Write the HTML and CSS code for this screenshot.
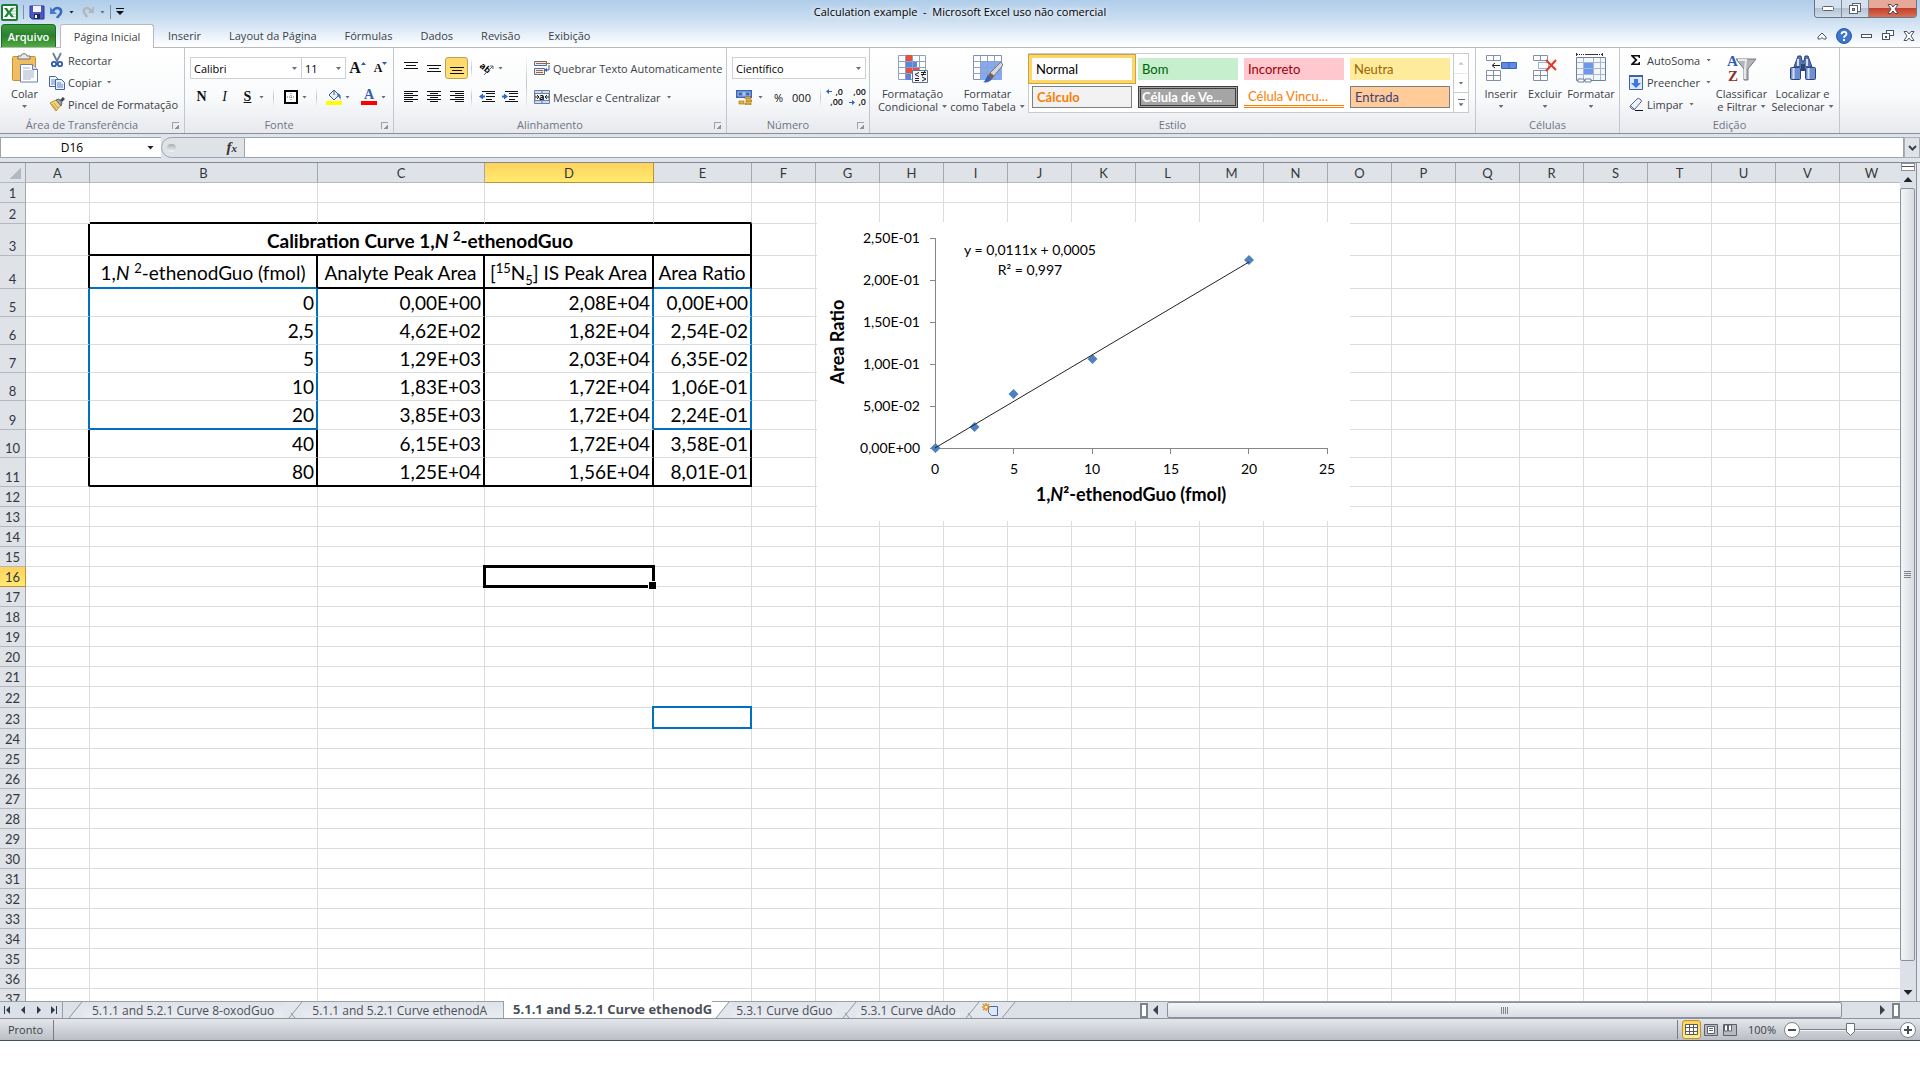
FILE: index.html
```
<!DOCTYPE html>
<html lang="pt-BR">
<head>
    <meta charset="UTF-8">
    <meta name="viewport" content="width=device-width, initial-scale=1.0">
    <title>Calculation example - Microsoft Excel uso não comercial</title>
    <link rel="stylesheet" href="styles.css">
</head>
<body>
<div class="app">
    <header class="top">
        <div class="titlebar">
            <div class="quick">
                <svg width="17" height="17" viewBox="0 0 17 17"><rect x="1" y="1" width="15" height="15" rx="1" fill="#fff" stroke="#1f7a34" stroke-width="2"/><path d="M10 4h5M10 7h5M10 10h5M10 13h5" stroke="#8fc79a"/><path d="M3 4h3l2 3 2-3h3l-3.500 4.500L13 13h-3L8 10l-2 3H3l3.300-4.500z" fill="#1c8a35"/></svg>
                <i class="qsep"></i>
                <button aria-label="Salvar"><svg width="16" height="16" viewBox="0 0 16 16"><path d="M1 2h14v13H3l-2-2z" fill="#4a58c2" stroke="#2c3592"/><path d="M4 2h8v6H4z" fill="#f2f5ff"/><path d="M5 10h6v5H5z" fill="#20255f"/><path d="M6 11h2v3H6z" fill="#fff"/></svg></button>
                <button aria-label="Desfazer"><svg width="14" height="14" viewBox="0 0 14 14"><path d="M3 6C6 1 12 3 11 7.500 10.500 10 8 11 7 13" fill="none" stroke="#3a68bd" stroke-width="2.500"/><path d="M0 2v7h7z" fill="#4a7bd0"/></svg></button>
                <i class="arr dark"></i>
                <button aria-label="Refazer" class="redo"><svg width="14" height="14" viewBox="0 0 14 14"><path d="M10 6C7 1 2 3 3 7c.5 2 2 3 3 5" fill="none" stroke="#b3b8bf" stroke-width="2.500"/><path d="M13 1v7H7z" fill="#b3b8bf"/></svg></button>
                <i class="arr"></i>
                <i class="qsep"></i>
                <button aria-label="Personalizar"><svg width="8" height="8" viewBox="0 0 8 8"><path d="M0 0h8v1H0zM0 3h8L4 7z" fill="#111"/></svg></button>
            </div>
            <h1>Calculation example &nbsp;- &nbsp;Microsoft Excel uso não comercial</h1>
            <div class="winbtns">
                <button aria-label="Minimizar"><svg width="12" height="6" viewBox="0 0 12 6"><rect x=".5" y=".5" width="11" height="4" rx="1" fill="#fff" stroke="#596273"/></svg></button>
                <button aria-label="Restaurar"><svg width="12" height="12" viewBox="0 0 12 12"><rect x="3.500" y=".5" width="8" height="8" fill="#fff" stroke="#596273"/><rect x=".5" y="2.500" width="8" height="8" fill="#fff" stroke="#596273"/><rect x="3.500" y="5.500" width="2" height="2" fill="#aab" stroke="#596273"/></svg></button>
                <button aria-label="Fechar" class="close"><svg width="12" height="10" viewBox="0 0 12 10"><path d="M1 .5h3L6 3l2-2.500h3L8 5l3 4.500H8L6 7 4 9.500H1L4 5z" fill="#fff" stroke="#5b4450"/></svg></button>
            </div>
        </div>
        <nav class="tabs">
            <button class="file">Arquivo</button>
            <button class="on">Página Inicial</button>
            <button>Inserir</button>
            <button>Layout da Página</button>
            <button>Fórmulas</button>
            <button>Dados</button>
            <button>Revisão</button>
            <button>Exibição</button>
            <div class="tools">
                <button aria-label="Minimizar Faixa"><svg width="10" height="8" viewBox="0 0 10 8"><path d="M1 5l4-4 4 4v2H6.500L5 5.500 3.500 7H1z" fill="#fff" stroke="#4d5461"/></svg></button>
                <button aria-label="Ajuda"><svg width="16" height="16" viewBox="0 0 16 16"><circle cx="8" cy="8" r="7.500" fill="#3f74cf" stroke="#2c58a8"/><path d="M5.500 6.200C5.500 3 10.500 3 10.500 6 10.500 7.800 8 7.800 8 9.700" fill="none" stroke="#fff" stroke-width="1.800"/><path d="M7 11h2v2H7z" fill="#fff"/></svg></button>
                <button aria-label="Minimizar Janela"><svg width="12" height="6" viewBox="0 0 12 6"><rect x=".5" y="1.500" width="10" height="3" fill="#fff" stroke="#4d5461"/></svg></button>
                <button aria-label="Restaurar Janela"><svg width="12" height="11" viewBox="0 0 12 11"><rect x="4.500" y=".5" width="7" height="5" fill="#fff" stroke="#4d5461"/><rect x=".5" y="3.500" width="7" height="6" fill="#fff" stroke="#4d5461"/><path d="M3 6h2v2H3z" fill="#4d5461"/></svg></button>
                <button aria-label="Fechar Janela"><svg width="12" height="10" viewBox="0 0 12 10"><path d="M1 .5h3L6 3l2-2.500h3L8 5l3 4.500H8L6 7 4 9.500H1L4 5z" fill="#fff" stroke="#4d5461"/></svg></button>
            </div>
        </nav>
    </header>

    <div class="ribbon">
        <section class="group clip">
            <div class="body">
                <button class="big">
                    <svg width="28" height="30" viewBox="0 0 28 30"><rect x="1.500" y="3.500" width="23" height="24" rx="1" fill="#f0bd60" stroke="#c9902f"/><path d="M7 6V3h3c0-3 6-3 6 0h3v3z" fill="#e8e8ea" stroke="#70737a"/><path d="M9.500 11.500h12l5 5V29h-17z" fill="#fff" stroke="#6d7fa6"/><path d="M21.500 11.500v5h5" fill="#d7e0f1" stroke="#6d7fa6"/><path d="M12 15h7M12 18h11M12 20h11M12 22h11M12 24h11M12 26h8" stroke="#a3b1cb"/></svg>
                    <span>Colar</span><i class="arr"></i>
                </button>
                <div class="list">
                    <button><svg width="16" height="16" viewBox="0 0 16 16"><path d="M4 1l4.500 9M12 1L7.500 10" stroke="#6c7d9c" stroke-width="1.800"/><circle cx="5" cy="12" r="2.200" fill="#fff" stroke="#2d5bb0" stroke-width="1.800"/><circle cx="11" cy="12" r="2.200" fill="#fff" stroke="#2d5bb0" stroke-width="1.800"/></svg>Recortar</button>
                    <button><svg width="16" height="16" viewBox="0 0 16 16"><path d="M.5 2.500h6l3 3v7h-9z" fill="#fff" stroke="#3f65ad"/><path d="M2 6h4M2 8h5M2 10h5" stroke="#5c83cc"/><path d="M6.500 5.500h6l3 3v7h-9z" fill="#e9f0fc" stroke="#3f65ad"/><path d="M8 9h4M8 11h6M8 13h6" stroke="#5c83cc"/></svg>Copiar<i class="arr"></i></button>
                    <button><svg width="16" height="16" viewBox="0 0 16 16"><path d="M1 7l6-3 5 5-5 6z" fill="#f5d577" stroke="#b88b2b"/><path d="M3 8l4 5M5 7l4 5" stroke="#c99f3e"/><path d="M7 4l3-1 3 4-1 3z" fill="#9fa4ac" stroke="#60656e"/><path d="M11 4l3-3 2 2-3 3z" fill="#3c4452"/></svg>Pincel de Formatação</button>
                </div>
            </div>
            <h2>Área de Transferência<i class="launch"></i></h2>
        </section>

        <section class="group font">
            <div class="body rows">
                <div class="row">
                    <select class="fname" aria-label="Fonte"><option>Calibri</option></select><select class="fsize" aria-label="Tamanho"><option>11</option></select>
                    <button class="ic serif a1">A<sup><svg width="5" height="3" viewBox="0 0 5 3"><path d="M0 3h5L2.500 0z" fill="#3358a8"/></svg></sup></button>
                    <button class="ic serif a2">A<sup><svg width="5" height="3" viewBox="0 0 5 3"><path d="M0 0h5L2.500 3z" fill="#3358a8"/></svg></sup></button>
                </div>
                <div class="row">
                    <button class="ic serif"><b>N</b></button>
                    <button class="ic serif"><em>I</em></button>
                    <button class="ic serif"><u>S</u></button><i class="arr"></i>
                    <i class="sep"></i>
                    <button class="ic" aria-label="Bordas"><svg width="14" height="14" viewBox="0 0 14 14"><rect x="1" y="1" width="12" height="12" fill="#fff" stroke="#000" stroke-width="2"/><path d="M7 3v8M3 7h8" stroke="#666" stroke-dasharray="1 1"/></svg></button><i class="arr"></i>
                    <i class="sep"></i>
                    <button class="ic" aria-label="Cor de Preenchimento"><svg width="16" height="16" viewBox="0 0 16 16"><path d="M0 12h16v4H0z" fill="#ff0"/><path d="M3 6l5-5 5 5-5 5z" fill="#e8edf6" stroke="#42597f"/><path d="M8 6V1" stroke="#42597f"/><path d="M11 4c4 1 4 3 3.500 7-1-2-1-3-3-4z" fill="#3b6fc4"/></svg></button><i class="arr"></i>
                    <button class="ic serif fcolor">A</button><i class="arr"></i>
                </div>
            </div>
            <h2>Fonte<i class="launch"></i></h2>
        </section>

        <section class="group align">
            <div class="body">
                <div class="rows">
                    <div class="row">
                        <button class="ic" aria-label="Alinhar em Cima"><svg width="14" height="14" viewBox="0 0 14 14"><path d="M0 1.500h14M2 4.500h10M0 7.500h14" stroke="#111"/></svg></button>
                        <button class="ic" aria-label="Alinhar no Meio"><svg width="14" height="14" viewBox="0 0 14 14"><path d="M0 4.500h14M2 7.500h10M0 10.500h14" stroke="#111"/></svg></button>
                        <button class="ic on" aria-label="Alinhar em Baixo"><svg width="14" height="14" viewBox="0 0 14 14"><path d="M0 6.500h14M2 9.500h10M0 12.500h14" stroke="#111"/></svg></button>
                        <i class="sep"></i>
                        <button class="ic" aria-label="Orientação"><svg width="16" height="16" viewBox="0 0 16 16"><text x="1" y="10" font-size="9" font-weight="700" transform="rotate(40 5 7)">ab</text><path d="M5 15L14 6M14 6h-3M14 6v3" stroke="#666" fill="none"/></svg></button><i class="arr"></i>
                    </div>
                    <div class="row">
                        <button class="ic" aria-label="Esquerda"><svg width="14" height="12" viewBox="0 0 14 12"><path d="M0 .5h14M0 2.500h9M0 4.500h14M0 6.500h9M0 8.500h14M0 10.500h9" stroke="#111"/></svg></button>
                        <button class="ic" aria-label="Centralizar"><svg width="14" height="12" viewBox="0 0 14 12"><path d="M0 .5h14M3 2.500h8M0 4.500h14M3 6.500h8M0 8.500h14M3 10.500h8" stroke="#111"/></svg></button>
                        <button class="ic" aria-label="Direita"><svg width="14" height="12" viewBox="0 0 14 12"><path d="M0 .5h14M5 2.500h9M0 4.500h14M5 6.500h9M0 8.500h14M5 10.500h9" stroke="#111"/></svg></button>
                        <i class="sep"></i>
                        <button class="ic" aria-label="Diminuir Recuo"><svg width="16" height="14" viewBox="0 0 16 14"><path d="M3 1.500h13M7 3.500h9M7 6.500h9M7 9.500h6M3 11.500h13" stroke="#111"/><path d="M0 6.500l4-3v2h2v2H4v2z" fill="#3167c4"/></svg></button>
                        <button class="ic" aria-label="Aumentar Recuo"><svg width="16" height="14" viewBox="0 0 16 14"><path d="M3 1.500h13M7 3.500h9M7 6.500h9M7 9.500h6M3 11.500h13" stroke="#111"/><path d="M6 6.500l-4-3v2H0v2h2v2z" fill="#3167c4"/></svg></button>
                    </div>
                </div>
                <i class="sep tall"></i>
                <div class="rows texts">
                    <button><svg width="16" height="16" viewBox="0 0 16 16"><path d="M.5 1.500h12v4H.5zM.5 8.500h10v6H.5z" fill="#e7edf7" stroke="#5b6c8f"/><path d="M2 3.500h14M2 10.500h7M2 12.500h7" stroke="#b3622a"/><path d="M15 5v5h-3" stroke="#2f5fb5" fill="none"/><path d="M10 10l3-2v4z" fill="#2f5fb5"/></svg>Quebrar Texto Automaticamente</button>
                    <button><svg width="16" height="16" viewBox="0 0 16 16"><path d="M.5 1.500h15v13H.5z" fill="#cfdcf0" stroke="#6b7fa6"/><path d="M8 1v3M8 12v3" stroke="#6b7fa6"/><path d="M1 4.500h14v7H1z" fill="#fff" stroke="#6b7fa6"/><path d="M1 8h4M11 8h4M3 6l2 2-2 2M13 6l-2 2 2 2" stroke="#222" fill="none"/><text x="5" y="11" font-size="9" font-weight="700">a</text></svg>Mesclar e Centralizar<i class="arr"></i></button>
                </div>
            </div>
            <h2>Alinhamento<i class="launch"></i></h2>
        </section>

        <section class="group number">
            <div class="body rows">
                <select class="nfmt" aria-label="Formato de Número"><option>Científico</option></select>
                <div class="row">
                    <button class="ic" aria-label="Moeda"><svg width="16" height="16" viewBox="0 0 16 16"><path d="M0 1h16v8H0z" fill="#3d66b8"/><path d="M2 3h12v4H2z" fill="none" stroke="#a9c2ee"/><circle cx="8" cy="5" r="2" fill="#a9c2ee"/><path d="M9 8h6v2H9zM10 11h6v2h-6zM9 14h6v2H9zM3 12h5v3H3z" fill="#e9b33a" stroke="#9a6b12" stroke-width=".6"/></svg></button><i class="arr"></i>
                    <button class="ic pct">%</button>
                    <button class="ic pct">000</button>
                    <i class="sep"></i>
                    <button class="ic dec">,0<br>,00<svg width="6" height="5" viewBox="0 0 6 5"><path d="M0 2.500L3 0v2h3v1H3v2z" fill="#2c62c4"/></svg></button>
                    <button class="ic dec">,00<br>,0<svg class="low" width="6" height="5" viewBox="0 0 6 5"><path d="M6 2.500L3 0v2H0v1h3v2z" fill="#2c62c4"/></svg></button>
                </div>
            </div>
            <h2>Número<i class="launch"></i></h2>
        </section>

        <section class="group style">
            <div class="body">
                <button class="big">
                    <svg width="30" height="30" viewBox="0 0 30 30"><path d="M.5 2.500h27v24H.5z" fill="#fff" stroke="#8ea0c4"/><path d="M7 2h7v6H7zM7 14h14v6H7z" fill="#e8503a"/><path d="M7 8h12v6H7zM7 20h6v7H7z" fill="#5b86e0"/><path d="M7.500 2v25M14.500 2v25M21.500 2v25M0 8.500h28M0 14.500h28M0 20.500h28" stroke="#8ea0c4"/><path d="M14.500 17.500h15v12h-15z" fill="#f4f6fa" stroke="#68738a"/><path d="M21 19.500l-4 2 4 2M17 25.500h4M17 27.500h4M23 21.500h5M23 19.500h5M27 18l-3 5M24 24l4 2-4 2" stroke="#222" fill="none"/></svg>
                    <span>Formatação<br>Condicional<i class="arr"></i></span>
                </button>
                <button class="big">
                    <svg width="30" height="30" viewBox="0 0 30 30"><path d="M.5 2.500h28v24H.5z" fill="#fff" stroke="#7f90b3"/><path d="M7 9h22v18H7z" fill="#86aaf0"/><path d="M7.500 2v25M14.500 2v25M21.500 2v25M0 8.500h29M0 14.500h29M0 20.500h29" stroke="#8ea0c4"/><path d="M28 9l2 3-9 11-4-3z" fill="#d5d8dd" stroke="#70757e"/><path d="M17 20l4 3-2 3-4-3z" fill="#8a5a34"/><path d="M15 22l4 4c-2 3-6 4-9 3 3-1 3-5 5-7z" fill="#3566b8"/></svg>
                    <span>Formatar<br>como Tabela<i class="arr"></i></span>
                </button>
                <div class="gallery">
                    <div class="swatches">
                        <button class="s-normal">Normal</button>
                        <button class="s-good">Bom</button>
                        <button class="s-bad">Incorreto</button>
                        <button class="s-neutral">Neutra</button>
                        <button class="s-calc">Cálculo</button>
                        <button class="s-check">Célula de Ve...</button>
                        <button class="s-link">Célula Vincu...</button>
                        <button class="s-input">Entrada</button>
                    </div>
                    <div class="gscroll">
                        <button aria-label="Acima" class="off"><i class="arr up"></i></button>
                        <button aria-label="Abaixo"><i class="arr"></i></button>
                        <button aria-label="Mais" class="more"><i class="arr"></i></button>
                    </div>
                </div>
            </div>
            <h2>Estilo</h2>
        </section>

        <section class="group cells">
            <div class="body">
                <button class="big">
                    <svg width="32" height="30" viewBox="0 0 32 30"><path d="M1.500 2.500h14v5h-14zM1.500 17.500h14v10h-14zM8.500 2.500v5M8.500 17.500v10M1.500 22.500h14" fill="#fff" stroke="#8390ad"/><path d="M16.500 9.500h15v6h-15z" fill="#5e8be6" stroke="#3e64b0"/><path d="M24 9.500v6" stroke="#3e64b0"/><path d="M8 12.500h7M10 10l-3 2.500 3 2.500" stroke="#222" fill="none"/></svg>
                    <span>Inserir</span><i class="arr"></i>
                </button>
                <button class="big">
                    <svg width="26" height="30" viewBox="0 0 26 30"><path d="M1.500 2.500h14v5h-14zM1.500 17.500h14v10h-14zM8.500 2.500v5M8.500 17.500v10M1.500 22.500h14" fill="#fff" stroke="#8390ad"/><path d="M6.500 9.500h10v6h-10z" fill="none" stroke="#3e64b0" stroke-dasharray="1 1"/><path d="M14 7l10 10M24 7L14 18" stroke="#e5391f" stroke-width="2"/></svg>
                    <span>Excluir</span><i class="arr"></i>
                </button>
                <button class="big">
                    <svg width="32" height="30" viewBox="0 0 32 30"><path d="M2 1.500h26" stroke="#222" stroke-dasharray="1 1"/><path d="M10 1.500h12M1.500 0v3M27.500 0v3" stroke="#334"/><path d="M1.500 4.500h29v23h-29z" fill="#f3f6fb" stroke="#6f7f9f"/><path d="M9 10h9v12H9z" fill="#6c97ee"/><path d="M8.500 5v22M18.500 5v22M25.500 5v22M2 9.500h28M2 15.500h28M2 21.500h28" stroke="#aab6cc"/><path d="M3 26h6v3H3zM10 26h6v3h-6z" fill="#fff" stroke="#6f7f9f"/></svg>
                    <span>Formatar</span><i class="arr"></i>
                </button>
            </div>
            <h2>Células</h2>
        </section>

        <section class="group edit">
            <div class="body">
                <div class="list">
                    <button><svg width="14" height="16" viewBox="0 0 14 16"><path d="M2 3h9v3h-1L9 4.500H5L8.500 8 5 11.500h4L10 10h1v3H2v-1l4-4-4-4z" fill="#111"/></svg>AutoSoma<i class="arr"></i></button>
                    <button><svg width="14" height="16" viewBox="0 0 14 16"><path d="M.5 1.500h13v14H.5z" fill="#dfe9fb" stroke="#3a62b0"/><path d="M0 1h14v2H0z" fill="#3a62b0"/><path d="M5 5h4v4h3l-5 5-5-5h3z" fill="#3f78dd"/></svg>Preencher<i class="arr"></i></button>
                    <button><svg width="14" height="16" viewBox="0 0 14 16"><path d="M1 10l7-7q1-1 3 0l1 1q1 1 0 2l-6 7q-1 1-3 0l-1-1q-1-1-1-2z" fill="#eef2fa" stroke="#56658a"/><path d="M2 10l4 4" stroke="#56658a"/><path d="M6 14.500h8" stroke="#111"/></svg>Limpar<i class="arr"></i></button>
                </div>
                <button class="big">
                    <svg width="30" height="30" viewBox="0 0 30 30"><path d="M9 6h20l-8 10v11h-4V16z" fill="#b2b4b8" stroke="#75787e"/><path d="M11 7h8l-1 9v10" fill="none" stroke="#e9eaec" stroke-width="2"/><text x="0" y="13" class="az" fill="#2e5db8">A</text><text x="1" y="28" class="az" fill="#8c2f2c">Z</text></svg>
                    <span>Classificar<br>e Filtrar<i class="arr"></i></span>
                </button>
                <button class="big">
                    <svg width="28" height="28" viewBox="0 0 28 28"><path d="M9 2h3l1 5h2l1-5h3l4 11H5z" fill="#5775b3" stroke="#2c4478"/><rect x="1.500" y="13.500" width="10" height="12" rx="1" fill="#6f8fce" stroke="#2c4478"/><rect x="16.500" y="13.500" width="10" height="12" rx="1" fill="#6f8fce" stroke="#2c4478"/><path d="M4.500 14v11M19.500 14v11M9 5v7M18 5v7" stroke="#d5e1f7" stroke-width="2"/><path d="M12 10h4v7h-4z" fill="#2c4478"/></svg>
                    <span>Localizar e<br>Selecionar<i class="arr"></i></span>
                </button>
            </div>
            <h2>Edição</h2>
        </section>
    </div>

    <div class="formula">
        <div class="namebox"><input type="text" value="D16" aria-label="Caixa de nome"><i class="arr dark"></i></div>
        <div class="fx"><i class="knob"></i><button aria-label="Inserir função">f<small>x</small></button></div>
        <input type="text" class="fbar" aria-label="Barra de fórmulas">
        <button class="expand" aria-label="Expandir"><svg width="9" height="6" viewBox="0 0 9 6"><path d="M1 1l3.500 3.500L8 1" fill="none" stroke="#3c424c" stroke-width="2"/></svg></button>
    </div>

    <main class="book">
        <div class="sheet">
            <table class="grid" id="grid">
                <colgroup>
                    <col class="c-head"><col class="c-a"><col class="c-b"><col class="c-c"><col class="c-d"><col class="c-e"><col span="18" class="c-a">
                </colgroup>
                <thead>
                    <tr><th class="corner"></th><th>A</th><th>B</th><th>C</th><th class="sel">D</th><th>E</th><th>F</th><th>G</th><th>H</th><th>I</th><th>J</th><th>K</th><th>L</th><th>M</th><th>N</th><th>O</th><th>P</th><th>Q</th><th>R</th><th>S</th><th>T</th><th>U</th><th>V</th><th>W</th></tr>
                </thead>
                <tbody>
                    <tr><th>1</th></tr>
                    <tr class="h21"><th>2</th><td></td><td class="bb"></td><td class="bb"></td><td class="bb"></td><td class="bb"></td></tr>
                    <tr class="h32"><th>3</th><td class="br"></td><td colspan="4" class="br bb name">Calibration Curve 1,<em>N</em> <sup>2</sup>-ethenodGuo</td></tr>
                    <tr class="h33"><th>4</th><td class="br"></td><td class="br bb blueb mid">1,<em>N</em> <sup>2</sup>-ethenodGuo (fmol)</td><td class="br bb mid">Analyte Peak Area</td><td class="br bb mid">[<sup>15</sup>N<sub>5</sub>] IS Peak Area</td><td class="br bb blueb mid">Area Ratio</td></tr>
                    <tr class="h28"><th>5</th><td class="br bluer"></td><td class="br bluer">0</td><td class="br">0,00E+00</td><td class="br bluer">2,08E+04</td><td class="br bluer">0,00E+00</td></tr>
                    <tr class="h28"><th>6</th><td class="br bluer"></td><td class="br bluer">2,5</td><td class="br">4,62E+02</td><td class="br bluer">1,82E+04</td><td class="br bluer">2,54E-02</td></tr>
                    <tr class="h28"><th>7</th><td class="br bluer"></td><td class="br bluer">5</td><td class="br">1,29E+03</td><td class="br bluer">2,03E+04</td><td class="br bluer">6,35E-02</td></tr>
                    <tr class="h28"><th>8</th><td class="br bluer"></td><td class="br bluer">10</td><td class="br">1,83E+03</td><td class="br bluer">1,72E+04</td><td class="br bluer">1,06E-01</td></tr>
                    <tr class="h29"><th>9</th><td class="br bluer"></td><td class="br bluer bb blueb">20</td><td class="br">3,85E+03</td><td class="br bluer">1,72E+04</td><td class="br bluer bb blueb">2,24E-01</td></tr>
                    <tr class="h28"><th>10</th><td class="br"></td><td class="br">40</td><td class="br">6,15E+03</td><td class="br">1,72E+04</td><td class="br">3,58E-01</td></tr>
                    <tr class="h29"><th>11</th><td class="br"></td><td class="br bb">80</td><td class="br bb">1,25E+04</td><td class="br bb">1,56E+04</td><td class="br bb">8,01E-01</td></tr>
                </tbody>
            </table>
            <svg class="chart" width="533" height="299" viewBox="0 0 533 299">
                <path class="axis" d="M118.500 16v215M113 226.500h398M113 16.500h5M113 58.500h5M113 100.500h5M113 142.500h5M113 184.500h5M196.500 226v6M275.500 226v6M353.500 226v6M431.500 226v6M510.500 226v6"/>
                <g class="mark"><path d="M118.500 221l5 5-5 5-5-5z"/><path d="M157.500 200l5 5-5 5-5-5z"/><path d="M196.500 167l5 5-5 5-5-5z"/><path d="M275.500 132l5 5-5 5-5-5z"/><path d="M432 33l5 5-5 5-5-5z"/></g>
                <path d="M118 226L432 40" stroke="#222" fill="none"/>
                <g text-anchor="end"><text x="103" y="21">2,50E-01</text><text x="103" y="63">2,00E-01</text><text x="103" y="105">1,50E-01</text><text x="103" y="147">1,00E-01</text><text x="103" y="189">5,00E-02</text><text x="103" y="231">0,00E+00</text></g>
                <g text-anchor="middle"><text x="118" y="252">0</text><text x="197" y="252">5</text><text x="275" y="252">10</text><text x="354" y="252">15</text><text x="432" y="252">20</text><text x="510" y="252">25</text>
                <text x="213" y="33">y = 0,0111x + 0,0005</text><text x="213" y="53">R² = 0,997</text>
                <text x="314" y="279" class="ttl">1,<tspan font-style="italic">N</tspan>²-ethenodGuo (fmol)</text>
                <text x="27" y="120" class="ttl" transform="rotate(-90 27 120)">Area Ratio</text></g>
            </svg>
        </div>
        <div class="vscroll">
            <i class="split"></i>
            <button aria-label="Subir"><i class="arr up dark"></i></button>
            <div class="vthumb"><i></i></div>
            <button aria-label="Descer" class="down"><i class="arr dark"></i></button>
        </div>
    </main>

    <div class="bottom">
        <div class="navs">
            <button aria-label="Primeira"><svg width="8" height="8" viewBox="0 0 8 8"><path d="M0 0h1v8H0zM6 0v8L2 4z" fill="#333a47"/></svg></button>
            <button aria-label="Anterior"><svg width="8" height="8" viewBox="0 0 8 8"><path d="M6 0v8L2 4z" fill="#333a47"/></svg></button>
            <button aria-label="Próxima"><svg width="8" height="8" viewBox="0 0 8 8"><path d="M2 0v8l4-4z" fill="#333a47"/></svg></button>
            <button aria-label="Última"><svg width="8" height="8" viewBox="0 0 8 8"><path d="M6 0h1v8H6zM1 0v8l4-4z" fill="#333a47"/></svg></button>
        </div>
        <svg class="slant" width="20" height="16" viewBox="0 0 20 16"><path d="M20 0h-1L6 16h14z" fill="#e3e6ec"/><path d="M19 0L6 16" stroke="#8f97a3"/></svg>
        <button class="st wide">5.1.1 and 5.2.1 Curve 8-oxodGuo</button>
        <svg class="slant" width="20" height="16" viewBox="0 0 20 16"><path d="M0 0h20v16H0z" fill="#e3e6ec"/><path d="M19 0L6 16M8 11l4 5" stroke="#8f97a3"/></svg>
        <button class="st wide">5.1.1 and 5.2.1 Curve ethenodA</button>
        <button class="st on">5.1.1 and 5.2.1 Curve ethenodG</button>
        <svg class="slant" width="20" height="16" viewBox="0 0 20 16"><path d="M0 0h17L4 16H0z" fill="#fff"/><path d="M17 0h3v16H4z" fill="#e3e6ec"/><path d="M17 0L4 16" stroke="#8f97a3"/></svg>
        <button class="st">5.3.1 Curve dGuo</button>
        <svg class="slant" width="20" height="16" viewBox="0 0 20 16"><path d="M0 0h20v16H0z" fill="#e3e6ec"/><path d="M19 0L6 16M8 11l4 5" stroke="#8f97a3"/></svg>
        <button class="st">5.3.1 Curve dAdo</button>
        <svg class="slant" width="20" height="16" viewBox="0 0 20 16"><path d="M0 0h20v16H0z" fill="#e3e6ec"/><path d="M19 0L6 16M8 11l4 5" stroke="#8f97a3"/></svg>
        <button class="st new" aria-label="Inserir Planilha"><svg width="36" height="16" viewBox="0 0 36 16"><path d="M0 0h35L22 16H0z" fill="#e3e6ec"/><path d="M35 0L22 16" stroke="#8f97a3"/><path d="M8.500 4.500h9v9h-6l-3-3z" fill="#dbe7fb" stroke="#52699c"/><path d="M6 1v8M2 5h8M3 2l6 6M9 2L3 8" stroke="#df8a1c" stroke-width="1.400"/><circle cx="6" cy="5" r="1.500" fill="#fff2c4"/></svg></button>
        <div class="hscroll">
            <i class="hsplit"></i>
            <button aria-label="Esquerda"><svg width="6" height="10" viewBox="0 0 6 10"><path d="M5 0v10L0 5z" fill="#3a3f48"/></svg></button>
            <div class="hthumb"><i></i></div>
            <button aria-label="Direita" class="right"><svg width="6" height="10" viewBox="0 0 6 10"><path d="M0 0v10l5-5z" fill="#3a3f48"/></svg></button>
            <i class="hsplit"></i>
        </div>
    </div>

    <footer class="status">
        <span class="ready">Pronto</span>
        <div class="view">
            <button class="on" aria-label="Normal"><svg width="13" height="11" viewBox="0 0 13 11"><path d="M.5.500h12v10H.5zM4.500 0v11M8.500 0v11M0 3.500h13M0 7.500h13" fill="#fff" stroke="#5a5a5a"/></svg></button>
            <button aria-label="Layout da Página"><svg width="14" height="12" viewBox="0 0 14 12"><path d="M.5.500h13v11H.5z" fill="#b7bbc0" stroke="#5d6268"/><path d="M3.500 2.500h7v7h-7z" fill="#fff" stroke="#5d6268"/><path d="M5 4.500h4M5 6.500h4" stroke="#5d6268"/></svg></button>
            <button aria-label="Quebra de Página"><svg width="14" height="12" viewBox="0 0 14 12"><path d="M.5.500h13v11H.5z" fill="#b7bbc0" stroke="#5d6268"/><path d="M1.500 1h3v6h-3zM5.500 1h3v6h-3z" fill="#fff" stroke="#5d6268"/></svg></button>
            <span class="pc">100%</span>
            <button class="z" aria-label="Reduzir"><svg width="16" height="16" viewBox="0 0 16 16"><circle cx="8" cy="8" r="7.500" fill="#fff" stroke="#7d838c"/><path d="M4 7h8v2H4z" fill="#4a4e55"/></svg></button>
            <input type="range" min="0" max="100" value="50" aria-label="Zoom">
            <button class="z" aria-label="Ampliar"><svg width="16" height="16" viewBox="0 0 16 16"><circle cx="8" cy="8" r="7.500" fill="#fff" stroke="#7d838c"/><path d="M4 7h8v2H4zM7 4h2v8H7z" fill="#4a4e55"/></svg></button>
        </div>
    </footer>
</div>
<script src="grid.js"></script>
</body>
</html>
```
FILE: styles.css
```
*{
    box-sizing: border-box;
}
body{
    margin: 0;
    background: #fff;
    font-family: "Open Sans", "Noto Sans", sans-serif;
    font-size: 11px;
    color: #3b3f46;
    overflow: hidden;
}
button{
    border: 0;
    padding: 0;
    background: none;
    font: inherit;
    color: inherit;
    white-space: nowrap;
}
svg{
    display: block;
    flex: none;
}
.app{
    height: calc(100vh - 39px);
    display: flex;
    flex-direction: column;
}

/* small drop-down arrow */
.arr{
    display: inline-block;
    flex: none;
    width: 5px;
    height: 3px;
    background: #6a6d73;
    clip-path: polygon(0 0, 100% 0, 50% 100%);
}
.arr.dark{
    width: 7px;
    height: 4px;
    background: #222;
}
.arr.up{
    clip-path: polygon(0 100%, 100% 100%, 50% 0);
}

/* title bar and tabs */
.top{
    background: linear-gradient(#afcdea, #c9ddf1 40%, #fbfdff 95%);
    border-bottom: 1px solid #b6babf;
}
.titlebar{
    height: 24px;
    display: grid;
    grid-template-columns: 1fr auto 1fr;
}
.titlebar h1{
    margin: 0;
    font-size: 11px;
    font-weight: 400;
    line-height: 24px;
    color: #000;
    text-shadow: 0 0 6px #fff, 0 0 6px #fff;
}
.quick{
    display: flex;
    align-items: center;
    gap: 5px;
    padding-left: 1px;
}
.quick .redo{
    margin-left: 2px;
}
.quick .dark{
    width: 5px;
    height: 3px;
}
.qsep{
    width: 1px;
    height: 14px;
    background: #7d8ea3;
}
.winbtns{
    justify-self: end;
    display: flex;
    height: 18px;
    margin-right: 3px;
    border: 1px solid #6c7685;
    border-top: 0;
    border-radius: 0 0 4px 4px;
    overflow: hidden;
}
.winbtns button{
    width: 27px;
    display: flex;
    align-items: center;
    justify-content: center;
    background: linear-gradient(#d5e1ee 45%, #b3c3d4 50%, #cfdce9);
    border-right: 1px solid #7f8a99;
}
.winbtns .close{
    width: 47px;
    border: 0;
    background: linear-gradient(#e6a898 45%, #c3402a 50%, #d9705a);
}
.tabs{
    display: flex;
    height: 23px;
    padding-left: 1px;
}
.tabs > button{
    padding: 0 14px;
}
.tabs .file{
    width: 55px;
    margin-right: 4px;
    padding: 0;
    color: #fff;
    font-weight: 600;
    background: linear-gradient(#3f9a3c, #2b7f2e 50%, #4fae3d);
    border: 1px solid #1c6a27;
    border-bottom: 0;
    border-radius: 4px 4px 0 0;
}
.tabs .on{
    width: 94px;
    padding: 0;
    background: #fff;
    border: 1px solid #b6babf;
    border-bottom: 0;
    border-radius: 3px 3px 0 0;
    margin-bottom: -1px;
}
.tools{
    display: flex;
    align-items: center;
    gap: 9px;
    margin-left: auto;
    padding-right: 5px;
}

/* ribbon */
.ribbon{
    display: flex;
    flex: none;
    height: 86px;
    background: linear-gradient(#fff, #fafbfc 55%, #e7e9ee);
    border-bottom: 1px solid #8b9097;
}
.group{
    flex: none;
    display: flex;
    flex-direction: column;
    border-right: 1px solid #c3c7cd;
}
.group h2{
    position: relative;
    margin: 0;
    font-size: 11px;
    font-weight: 400;
    line-height: 15px;
    text-align: center;
    color: #6e7683;
    padding-right: 20px;
}
.launch{
    position: absolute;
    right: 5px;
    top: 5px;
    width: 7px;
    height: 7px;
    border: 1px solid #9da2a9;
    border-right: 0;
    border-bottom: 0;
    background: linear-gradient(135deg, transparent 60%, #8d929a 60%);
}
.body{
    display: flex;
    height: 69px;
}
.clip{ width: 185px; }
.font{ width: 209px; }
.align{ width: 333px; }
.number{ width: 143px; }
.style{ width: 606px; }
.cells{ width: 144px; }
.edit{ width: 220px; }
.style h2, .cells h2, .edit h2{
    padding: 0;
}
.big{
    display: flex;
    flex-direction: column;
    align-items: center;
    padding-top: 5px;
    line-height: 13px;
}
.big svg{
    height: 30px;
    margin-bottom: 4px;
}
.big .arr{
    margin-top: 5px;
}
.big span .arr{
    margin: 0 0 3px 4px;
}
.clip .big{
    width: 49px;
}
.list{
    display: flex;
    flex-direction: column;
    padding-top: 1px;
}
.list button{
    display: flex;
    align-items: center;
    height: 22px;
    gap: 3px;
}
.list .arr{
    margin-left: 2px;
}
.rows{
    display: flex;
    flex-direction: column;
    gap: 7px;
    padding-top: 9px;
}
.row{
    display: flex;
    align-items: center;
    height: 22px;
}
.ic{
    width: 23px;
    height: 22px;
    display: flex;
    align-items: center;
    justify-content: center;
    color: #111;
}
.ic.on{
    background: linear-gradient(#fdd86c, #ffe27a);
    border: 1px solid #c2a04a;
    border-radius: 3px;
}
.serif{
    font-family: "Liberation Serif", serif;
    font-size: 14px;
}
.serif u{
    font-weight: 700;
}
.a1{
    font-size: 16px;
    font-weight: 700;
}
.a2{
    font-size: 12px;
    font-weight: 700;
}
.a1 sup, .a2 sup{
    height: 12px;
}
.fcolor{
    width: 16px;
    height: 16px;
    margin-left: 11px;
    font-weight: 700;
    color: #3460ae;
    border-bottom: 4px solid #f00;
}
.fcolor + .arr{
    margin-left: 4px;
}
.sep{
    width: 1px;
    height: 20px;
    margin: 0 3px;
    background: linear-gradient(transparent, #c2c6cc, transparent);
}
.sep.tall{
    height: 56px;
    margin: 7px 7px 0 5px;
    flex: none;
}
select{
    appearance: none;
    height: 22px;
    border: 1px solid #cdd0d5;
    border-radius: 0;
    padding: 0 3px;
    font: inherit;
    color: #000;
    background: #fff url("data:image/svg+xml,%3Csvg xmlns='http://www.w3.org/2000/svg' width='5' height='3'%3E%3Cpath d='M0 0h5L2.5 3z' fill='%236a6d73'/%3E%3C/svg%3E") no-repeat right 4px center;
}
.font .body{
    padding-left: 5px;
}
.fname{ width: 112px; }
.fsize{ width: 44px; border-left: 0; }
.nfmt{ width: 134px; }
.font .sep{
    margin: 0 5px 0 9px;
}
.align .body{
    padding-left: 5px;
}
.texts button{
    display: flex;
    align-items: center;
    gap: 3px;
    height: 22px;
}
.texts .arr{
    margin-left: 3px;
}
.number .body{
    padding-left: 5px;
}
.number .row .arr{
    margin: 0 4px 0 3px;
}
.number .sep{
    margin: 0 1px 0 7px;
}
.pct{
    font-size: 11px;
}
.dec{
    position: relative;
    display: block;
    padding-right: 2px;
    font-size: 9px;
    font-weight: 600;
    line-height: 10px;
    text-align: right;
}
.dec svg{
    position: absolute;
    left: 4px;
    top: 3px;
}
.dec .low{
    top: 14px;
}
.style .body{
    padding-left: 5px;
}
.style .big{
    width: 75px;
}
.gallery{
    display: flex;
    height: 60px;
    margin: 5px 0 0 3px;
    border: 1px solid #c9cccf;
    background: #fff;
}
.swatches{
    display: grid;
    grid-template-columns: repeat(4, 100px);
    gap: 6px;
    padding: 4px 3px;
}
.swatches button{
    height: 22px;
    padding: 0 4px;
    text-align: left;
    font-family: Lato, "Open Sans", sans-serif;
    font-size: 13px;
    line-height: 18px;
}
.s-normal{
    color: #000;
    outline: 3px solid #fbd768;
    box-shadow: 0 0 0 4px #c9a243;
}
.s-good{ background: #c6efce; color: #006100; }
.s-bad{ background: #ffc7ce; color: #9c0006; }
.s-neutral{ background: #ffeb9c; color: #9c6500; }
.swatches .s-calc{
    background: #f2f2f2;
    color: #fa7d00;
    font-weight: 700;
    border: 1px solid #7f7f7f;
}
.swatches .s-check{
    background: #a5a5a5;
    color: #fff;
    font-weight: 700;
    border: 3px double #3f3f3f;
    padding: 0 1px;
    line-height: 15px;
}
.swatches .s-link{
    color: #fa7d00;
    border-bottom: 3px double #ff8001;
}
.swatches .s-input{
    background: #ffcc99;
    color: #3f3f76;
    border: 1px solid #7f7f7f;
}
.gscroll{
    display: flex;
    flex-direction: column;
    width: 15px;
    border-left: 1px solid #c9cccf;
}
.gscroll button{
    flex: 1;
    display: flex;
    align-items: center;
    justify-content: center;
    border-bottom: 1px solid #c9cccf;
}
.gscroll .off{
    opacity: 0.4;
}
.gscroll .more{
    flex-direction: column;
    gap: 3px;
    border: 0;
}
.more::before{
    content: "";
    width: 7px;
    height: 1px;
    background: #6a6d73;
}
.cells .body{
    padding-left: 3px;
}
.cells .big{
    width: 44px;
}
.cells .big + .big + .big{
    width: 48px;
}
.edit .list{
    padding-left: 9px;
    width: 92px;
}
.edit .list button{
    gap: 4px;
}
.edit .big{
    width: 65px;
}
.edit .list + .big{
    width: 59px;
    margin-right: -1px;
}
.az{
    font-family: "Liberation Serif", serif;
    font-size: 15px;
    font-weight: 700;
}

/* formula bar */
.formula{
    display: flex;
    flex: none;
    height: 29px;
    padding: 3px 0 4px;
    background: #dfe4ec;
    border-bottom: 1px solid #85898f;
}
.formula input{
    border: 0;
    outline: 0;
    min-width: 0;
    padding: 0;
    font: inherit;
    background: #fff;
}
.namebox{
    display: flex;
    align-items: center;
    width: 161px;
    background: #fff;
    border: 1px solid #9da3ab;
    border-right: 0;
}
.formula .namebox input{
    width: 142px;
    margin-right: 4px;
    font-size: 12px;
    text-align: center;
    color: #000;
}
.fx{
    display: flex;
    align-items: center;
    justify-content: space-between;
    width: 84px;
    padding: 0 7px 0 5px;
    background: #dfe3e8;
    border: 1px solid #9da3ab;
    border-radius: 11px 0 0 11px;
}
.knob{
    width: 9px;
    height: 8px;
    border-radius: 5px;
    background: linear-gradient(#a9afb6, #f3f5f7);
}
.fx button{
    font: italic 700 15px "Liberation Serif", serif;
    color: #333;
}
.fx small{
    font-size: 11px;
}
.formula .fbar{
    flex: 1;
    border: 1px solid #9da3ab;
    border-left: 0;
}
.expand{
    width: 16px;
    display: flex;
    align-items: center;
    justify-content: center;
    background: #dfe3e8;
    border: 1px solid #a9afb7;
}

/* worksheet */
.book{
    flex: 1;
    min-height: 0;
    display: flex;
}
.sheet{
    position: relative;
    flex: 1;
    min-width: 0;
    overflow: hidden;
}
.grid{
    table-layout: fixed;
    width: 1904px;
    border-spacing: 0;
    font-family: Lato, "Open Sans", sans-serif;
    color: #000;
}
.c-head{ width: 26px; }
.c-a{ width: 64px; }
.c-b{ width: 228px; }
.c-c{ width: 167px; }
.c-d{ width: 169px; }
.c-e{ width: 98px; }
.grid tr{ height: 20px; }
.grid .h21{ height: 21px; }
.grid .h28{ height: 28px; }
.grid .h29{ height: 29px; }
.grid .h32{ height: 32px; }
.grid .h33{ height: 33px; }
.grid th{
    padding: 0;
    background: #dfe3e8;
    border-right: 1px solid #a3a8b0;
    border-bottom: 1px solid #b4b9c0;
    font-size: 13px;
    font-weight: 400;
    line-height: 18px;
    color: #33373d;
    vertical-align: bottom;
}
.grid .sel{
    background: linear-gradient(#ffd25c, #ffeb70);
    border-color: #c38f36;
}
.grid .corner{
    background: linear-gradient(135deg, #dfe3e8 50%, #b4b9c0 50%) no-repeat 10px 5px / 11px 11px #dfe3e8;
}
.grid td{
    padding: 0 2px 0 0;
    border-right: 1px solid #dadcdd;
    border-bottom: 1px solid #dadcdd;
    font-size: 19px;
    line-height: 18px;
    text-align: right;
    white-space: nowrap;
    vertical-align: middle;
}
.grid .br{
    border-right: 2px solid #000;
}
.grid .bb{
    border-bottom: 2px solid #000;
}
.grid .bluer{
    border-right-color: #0070c0;
}
.grid .blueb{
    border-bottom-color: #0070c0;
}
.grid .mid, .grid .name{
    padding: 2px 0 0;
    text-align: center;
}
.grid .name{
    padding-top: 4px;
    font-weight: 700;
}
.grid sup, .grid sub{
    font-size: 13px;
    line-height: 0;
}
.grid .active, .grid .boxed{
    position: relative;
}
.active::after{
    content: "";
    position: absolute;
    inset: -2px;
    border: 3px solid #000;
}
.active::before{
    content: "";
    position: absolute;
    right: -4px;
    bottom: -4px;
    z-index: 1;
    width: 7px;
    height: 7px;
    background: #000;
    border: 1px solid #fff;
}
.boxed::after{
    content: "";
    position: absolute;
    inset: -2px -1px -1px -2px;
    border: 2px solid #0070c0;
}
.chart{
    position: absolute;
    left: 817px;
    top: 59px;
    background: #fff;
    font-family: Lato, "Open Sans", sans-serif;
    font-size: 14px;
}
.axis{
    stroke: #868686;
    fill: none;
}
.mark{
    fill: #4f81bd;
}
.ttl{
    font-size: 18px;
    font-weight: 700;
}

/* scroll bars */
.vscroll{
    display: flex;
    flex-direction: column;
    width: 20px;
    padding-right: 3px;
    background: linear-gradient(90deg, #dce0e8 16px, #8a919c 16px 17px, #e7e9ee 17px);
}
.split{
    height: 8px;
    margin: 0 2px 0 1px;
    border: 1px solid #8a919c;
    background: linear-gradient(#fff 2px, #555 2px 3px, #fff 3px);
}
.vscroll button{
    height: 17px;
    width: 16px;
    display: flex;
    align-items: center;
    justify-content: center;
}
.vscroll .arr{
    width: 9px;
    height: 5px;
}
.vthumb{
    flex: 1;
    width: 15px;
    margin-bottom: 23px;
    display: flex;
    align-items: center;
    justify-content: center;
    border: 1px solid #8a919c;
    border-radius: 2px;
    background: linear-gradient(90deg, #f4f5f8, #d9dce4);
}
.vthumb i{
    width: 7px;
    height: 7px;
    background: repeating-linear-gradient(#7d838c 0 1px, transparent 1px 2px);
}
.bottom{
    display: flex;
    flex: none;
    height: 17px;
    background: #dce0e7;
    border-top: 1px solid #98a0ac;
    font-size: 12px;
}
.navs{
    display: flex;
    width: 63px;
    align-items: center;
    justify-content: space-around;
    border-right: 1px solid #98a0ac;
}
.st{
    padding: 0 4px;
    line-height: 15px;
    background: linear-gradient(#dfe2e9, #e9ecf0);
    color: #4a4f59;
}
.st.wide{
    padding: 0 9px;
}
.st.wide:has(+ .on){
    padding-right: 16px;
}
.st.on{
    padding: 0 0 0 9px;
    margin-top: -1px;
    background: #fff;
    border-left: 1px solid #98a0ac;
    font-size: 13px;
    font-weight: 700;
}
.st.new{
    padding: 0;
    background: none;
}
.hscroll{
    display: flex;
    align-items: center;
    width: 760px;
    margin: 0 20px 0 auto;
}
.hsplit{
    width: 8px;
    height: 15px;
    border: 2px solid #7e848e;
    background: #fff;
}
.hscroll button{
    padding: 0 8px 0 5px;
}
.hscroll .right{
    padding: 0 6px 0 0;
}
.hthumb{
    flex: 1;
    height: 16px;
    margin-right: 38px;
    display: flex;
    align-items: center;
    justify-content: center;
    border: 1px solid #8a919c;
    border-radius: 2px;
    background: linear-gradient(#f4f5f8, #d9dce4);
}
.hthumb i{
    width: 7px;
    height: 7px;
    background: repeating-linear-gradient(90deg, #7d838c 0 1px, transparent 1px 2px);
}

/* status bar */
.status{
    display: flex;
    flex: none;
    align-items: center;
    justify-content: space-between;
    height: 23px;
    background: linear-gradient(#e3e6ea, #bbbfc5);
    border-top: 1px solid #8d939b;
    border-bottom: 1px solid #46515e;
}
.ready{
    padding: 0 10px 0 8px;
    line-height: 20px;
    border-right: 1px solid #777d85;
}
.view{
    display: flex;
    align-items: center;
    padding: 0 4px 0 4px;
    border-left: 1px solid #777d85;
}
.view button{
    width: 19px;
    height: 19px;
    display: flex;
    align-items: center;
    justify-content: center;
}
.view .on{
    background: linear-gradient(#fdd05a, #fff08a);
    border: 1px solid #c2902f;
    border-radius: 3px;
}
.view .z{
    width: 16px;
}
.pc{
    margin: 0 8px 0 9px;
}
.view input{
    appearance: none;
    width: 100px;
    height: 16px;
    margin: 0;
    background: linear-gradient(transparent 7px, #7d838c 7px 8px, #f3f4f6 8px 9px, transparent 9px);
}
.view input::-webkit-slider-thumb{
    appearance: none;
    width: 9px;
    height: 13px;
    background: url("data:image/svg+xml,%3Csvg xmlns='http://www.w3.org/2000/svg' width='9' height='13'%3E%3Cpath d='M.5.5h8v8l-4 4-4-4z' fill='%23fff' stroke='%23697078'/%3E%3C/svg%3E");
}
```
FILE: grid.js
```
var COLS = 23;
var ROWS = 37;
var body = document.querySelector("#grid tbody");

// add the empty rows below the data
for (var r = body.rows.length + 1; r <= ROWS; r++) {
    var tr = body.insertRow();
    var th = document.createElement("th");
    th.textContent = r;
    tr.appendChild(th);
    if (r == 22 || r == 23) tr.className = "h21";
    if (r == 16) th.className = "sel";
}

// fill every row up to the last column
Array.from(body.rows).forEach(function (row) {
    var used = 0;
    Array.from(row.cells).forEach(function (c) { used += c.colSpan; });
    for (; used <= COLS; used++) row.insertCell();
});

body.rows[15].cells[4].className = "active";
body.rows[22].cells[5].className = "boxed";
```
